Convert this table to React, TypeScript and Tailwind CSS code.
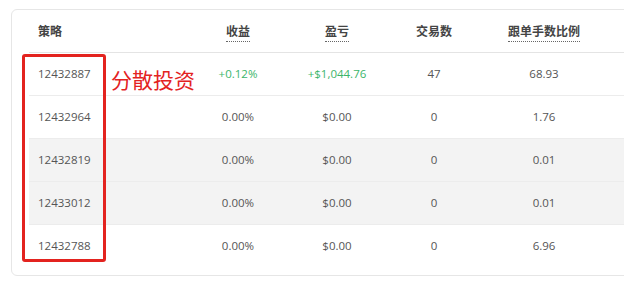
const ROWS = [
  { id: "12432887", yieldPct: "+0.12%", pnl: "+$1,044.76", trades: "47", ratio: "68.93", up: true },
  { id: "12432964", yieldPct: "0.00%", pnl: "$0.00", trades: "0", ratio: "1.76", up: false },
  { id: "12432819", yieldPct: "0.00%", pnl: "$0.00", trades: "0", ratio: "0.01", up: false },
  { id: "12433012", yieldPct: "0.00%", pnl: "$0.00", trades: "0", ratio: "0.01", up: false },
  { id: "12432788", yieldPct: "0.00%", pnl: "$0.00", trades: "0", ratio: "6.96", up: false },
];

const FONT = "font-['Open_Sans','Noto_Sans_CJK_SC',sans-serif]";

export default function App() {
  return (
    <div className={`relative h-[284px] w-[624px] overflow-hidden bg-white ${FONT}`}>
      <div className="ml-[11px] mt-[9px] w-[640px] rounded-[6px] border border-[#e6e6e6] px-[17px] pb-[8px]">
        <table className="w-[620px] table-fixed border-collapse text-left">
          <colgroup>
            <col className="w-[160px]" />
            <col className="w-[98px]" />
            <col className="w-[100px]" />
            <col className="w-[94px]" />
            <col className="w-[126px]" />
            <col />
          </colgroup>
          <thead>
            <tr className="h-[42px] border-b border-[#e4e4e4] text-[12px] font-semibold text-[#444]">
              <th className="pl-[9px] pt-[3px] font-semibold">策略</th>
              <th className="pt-[3px] text-center font-semibold">
                <span className="border-b border-dotted border-[#666] pb-[1px]">收益</span>
              </th>
              <th className="pt-[3px] text-center font-semibold">
                <span className="border-b border-dotted border-[#666] pb-[1px]">盈亏</span>
              </th>
              <th className="pt-[3px] text-center font-semibold">交易数</th>
              <th className="pt-[3px] text-center font-semibold">
                <span className="border-b border-dotted border-[#666] pb-[1px]">跟单手数比例</span>
              </th>
              <th />
            </tr>
          </thead>
          <tbody className="text-[11.5px] text-[#555]">
            {ROWS.map((r, i) => (
              <tr
                key={r.id}
                className={`h-[43px] border-b border-[#ececec] ${i === 2 || i === 3 ? "bg-[#f3f3f3]" : ""} ${i === 4 ? "border-b-0" : ""}`}
              >
                <td className="pl-[9px]">{r.id}</td>
                <td className={`text-center ${r.up ? "text-[#3bb56a]" : ""}`}>{r.yieldPct}</td>
                <td className={`text-center ${r.up ? "text-[#3bb56a]" : ""}`}>{r.pnl}</td>
                <td className="text-center">{r.trades}</td>
                <td className="text-center">{r.ratio}</td>
                <td />
              </tr>
            ))}
          </tbody>
        </table>
      </div>

      {/* annotation overlay */}
      <div className="absolute left-[22px] top-[54px] h-[208px] w-[84px] rounded-[3px] border-[3px] border-[#e3231f]" />
      <div className="absolute left-[111px] top-[64px] font-['Noto_Sans_CJK_SC',sans-serif] text-[21px] leading-[30px] text-[#e3231f]">
        分散投资
      </div>
    </div>
  );
}
